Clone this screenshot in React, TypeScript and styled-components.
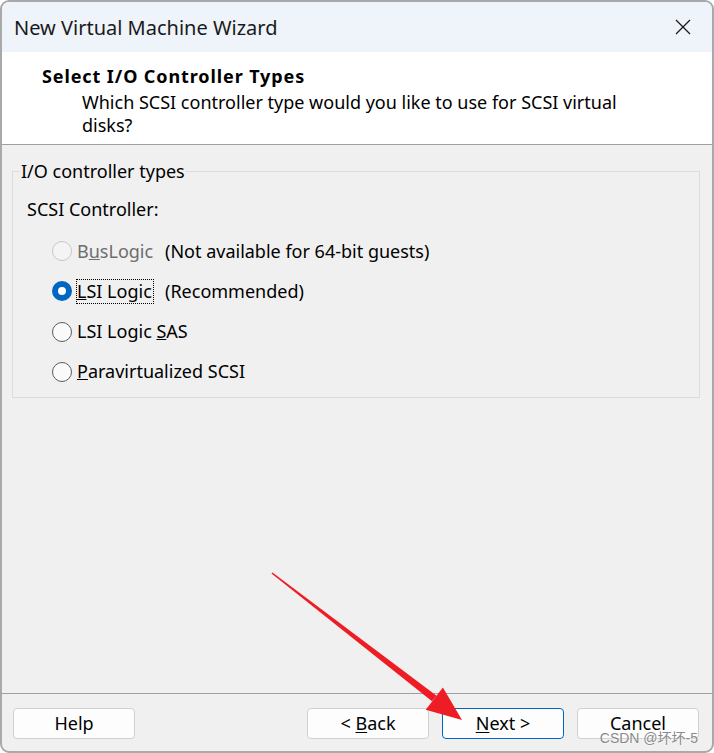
import styled, { createGlobalStyle } from "styled-components";

const GlobalStyle = createGlobalStyle`
  html, body {
    margin: 0;
    padding: 0;
    background: #ffffff;
  }
  body {
    font-family: "Noto Sans", "Liberation Sans", sans-serif;
    color: #000;
  }
`;

const Window = styled.div`
  position: relative;
  box-sizing: border-box;
  width: 714px;
  height: 753px;
  border: 2px solid #a9a9a9;
  border-radius: 9px;
  background: #f0f0f0;
  overflow: hidden;
  display: flex;
  flex-direction: column;
`;

const TitleBar = styled.div`
  height: 50px;
  background: #eff3fa;
  display: flex;
  align-items: center;
  justify-content: space-between;
  padding: 0 14px 0 12px;
`;

const TitleText = styled.div`
  font-size: 20px;
  color: #1a1a1a;
`;

const CloseButton = styled.div`
  width: 24px;
  height: 24px;
  display: flex;
  align-items: center;
  justify-content: center;
  margin-right: 3px;
`;

const Header = styled.div`
  background: #ffffff;
  border-bottom: 1px solid #a0a0a0;
  height: 93px;
  box-sizing: border-box;
  padding: 12px 0 0 40px;
`;

const HeaderTitle = styled.div`
  font-size: 18px;
  font-weight: 700;
  line-height: 24px;
  letter-spacing: 0.9px;
`;

const HeaderSub = styled.div`
  font-size: 18px;
  line-height: 23px;
  margin-top: 3px;
  padding-left: 40px;
  width: 550px;
`;

const Body = styled.div`
  flex: 1;
  padding: 14px 12px 0 10px;
`;

const GroupBox = styled.fieldset`
  margin: 0;
  border: 1px solid #dcdcdc;
  padding: 14px 14px 10px 14px;
  height: 239px;
  box-sizing: border-box;
`;

const Legend = styled.legend`
  font-size: 18px;
  padding: 0 1px;
  margin-left: -7px;
`;

const SectionLabel = styled.div`
  font-size: 18px;
  line-height: 24px;
  margin: 0 0 18px 0;
`;

const RadioList = styled.div`
  display: flex;
  flex-direction: column;
  gap: 16.3px;
  padding-left: 25px;
`;

const RadioRow = styled.div`
  display: flex;
  align-items: center;
  height: 24px;
`;

const RadioMain = styled.div`
  display: flex;
  align-items: center;
  width: 113px;
  flex: none;
  white-space: nowrap;
`;

const RadioCircle = styled.span<{ checked?: boolean; disabled?: boolean }>`
  box-sizing: border-box;
  width: 20px;
  height: 20px;
  border-radius: 50%;
  flex: none;
  border: ${(p) =>
    p.checked ? "6px solid #0067c0" : p.disabled ? "1px solid #c6c6c6" : "1px solid #5c5c5c"};
  background: ${(p) => (p.checked ? "#ffffff" : p.disabled ? "#f4f4f4" : "#fafafa")};
  margin-right: 5px;
`;

const RadioLabel = styled.span<{ disabled?: boolean; focused?: boolean }>`
  font-size: 18px;
  color: ${(p) => (p.disabled ? "#6d6d6d" : "#000")};
  outline: ${(p) => (p.focused ? "1px dotted #000" : "none")};
  line-height: 23px;
  padding-right: 1px;
`;

const Note = styled.span`
  font-size: 18px;
  white-space: nowrap;
`;

const Footer = styled.div`
  border-top: 1px solid #a0a0a0;
  height: 58px;
  box-sizing: border-box;
  padding: 14px 13px 0 11px;
  display: flex;
  align-items: flex-start;
`;

const Button = styled.button<{ primary?: boolean }>`
  width: 122px;
  height: 31px;
  box-sizing: border-box;
  background: #fdfdfd;
  border: 1px solid ${(p) => (p.primary ? "#0067c0" : "#d0d0d0")};
  border-radius: 4px;
  font-family: "Noto Sans", "Liberation Sans", sans-serif;
  font-size: 18px;
  color: #000;
  padding: 0;
  line-height: 29px;
  u {
    text-decoration-thickness: 1px;
    text-underline-offset: 2px;
  }
`;

const ButtonGroup = styled.div`
  margin-left: auto;
  display: flex;
  gap: 13px;
`;

const Arrow = styled.svg`
  position: absolute;
  left: 0;
  top: 0;
  pointer-events: none;
`;

const Watermark = styled.div`
  position: absolute;
  right: 14px;
  bottom: 4px;
  font-size: 14px;
  color: #8a8a8a;
  font-family: "Liberation Sans", "Noto Sans CJK SC", sans-serif;
  text-shadow: 0 0 2px #fff;
`;

export default function App() {
  return (
    <>
      <GlobalStyle />
      <Window>
        <TitleBar>
          <TitleText>New Virtual Machine Wizard</TitleText>
          <CloseButton>
            <svg width="16" height="16" viewBox="0 0 16 16">
              <path d="M1 1 L15 15 M15 1 L1 15" stroke="#1a1a1a" strokeWidth="1.3" fill="none" />
            </svg>
          </CloseButton>
        </TitleBar>
        <Header>
          <HeaderTitle>Select I/O Controller Types</HeaderTitle>
          <HeaderSub>Which SCSI controller type would you like to use for SCSI virtual disks?</HeaderSub>
        </Header>
        <Body>
          <GroupBox>
            <Legend>I/O controller types</Legend>
            <SectionLabel>SCSI Controller:</SectionLabel>
            <RadioList>
              <RadioRow>
                <RadioMain>
                  <RadioCircle disabled />
                  <RadioLabel disabled>
                    B<u>u</u>sLogic
                  </RadioLabel>
                </RadioMain>
                <Note>(Not available for 64-bit guests)</Note>
              </RadioRow>
              <RadioRow>
                <RadioMain>
                  <RadioCircle checked />
                  <RadioLabel focused>
                    <u>L</u>SI Logic
                  </RadioLabel>
                </RadioMain>
                <Note>(Recommended)</Note>
              </RadioRow>
              <RadioRow>
                <RadioMain>
                  <RadioCircle />
                  <RadioLabel>
                    LSI Logic <u>S</u>AS
                  </RadioLabel>
                </RadioMain>
              </RadioRow>
              <RadioRow>
                <RadioMain>
                  <RadioCircle />
                  <RadioLabel>
                    <u>P</u>aravirtualized SCSI
                  </RadioLabel>
                </RadioMain>
              </RadioRow>
            </RadioList>
          </GroupBox>
        </Body>
        <Footer>
          <Button>Help</Button>
          <ButtonGroup>
            <Button>
              &lt; <u>B</u>ack
            </Button>
            <Button primary>
              <u>N</u>ext &gt;
            </Button>
            <Button>Cancel</Button>
          </ButtonGroup>
        </Footer>
        <Arrow width="714" height="753" viewBox="0 0 714 753">
          <polygon points="269.5,571.5 270.5,570.5 434.6,693.8 430.0,699.3" fill="#ee1c25" />
          <polygon points="460,718 423.7,707.7 440.9,685.5" fill="#ee1c25" />
        </Arrow>
        <Watermark>CSDN @坏坏-5</Watermark>
      </Window>
    </>
  );
}
